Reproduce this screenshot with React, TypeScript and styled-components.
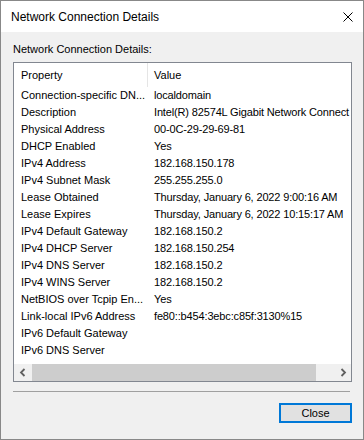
import React from 'react';
import styled, { createGlobalStyle } from 'styled-components';

const GlobalStyle = createGlobalStyle`
	html, body {
		margin: 0;
		padding: 0;
		background: #ffffff;
	}
	* {
		box-sizing: border-box;
	}
`;

const rows: [string, string][] = [
	['Connection-specific DN...', 'localdomain'],
	['Description', 'Intel(R) 82574L Gigabit Network Connect'],
	['Physical Address', '00-0C-29-29-69-81'],
	['DHCP Enabled', 'Yes'],
	['IPv4 Address', '182.168.150.178'],
	['IPv4 Subnet Mask', '255.255.255.0'],
	['Lease Obtained', 'Thursday, January 6, 2022 9:00:16 AM'],
	['Lease Expires', 'Thursday, January 6, 2022 10:15:17 AM'],
	['IPv4 Default Gateway', '182.168.150.2'],
	['IPv4 DHCP Server', '182.168.150.254'],
	['IPv4 DNS Server', '182.168.150.2'],
	['IPv4 WINS Server', '182.168.150.2'],
	['NetBIOS over Tcpip En...', 'Yes'],
	['Link-local IPv6 Address', 'fe80::b454:3ebc:c85f:3130%15'],
	['IPv6 Default Gateway', ''],
	['IPv6 DNS Server', ''],
];

const Window = styled.div`
	width: 364px;
	height: 440px;
	border: 1px solid #888888;
	background: #f0f0f0;
	display: flex;
	flex-direction: column;
	font-family: 'Liberation Sans', Arial, sans-serif;
	color: #000;
`;

const TitleBar = styled.div`
	height: 31px;
	background: #ffffff;
	display: flex;
	align-items: center;
	justify-content: space-between;
	padding: 0 10px 0 10px;
	font-size: 12px;
`;

const CloseGlyph = styled.svg`
	width: 10px;
	height: 10px;
	display: block;
`;

const Body = styled.div`
	flex: 1;
	display: flex;
	flex-direction: column;
	padding: 11px 11px 0 12px;
	font-size: 11px;
`;

const Caption = styled.div`
	height: 19px;
	line-height: 13px;
`;

const ListBox = styled.div`
	height: 320px;
	border: 1px solid #828790;
	background: #ffffff;
	display: flex;
	flex-direction: column;
	overflow: hidden;
`;

const HeaderRow = styled.div`
	height: 24px;
	display: grid;
	grid-template-columns: 134px 1fr;
	flex: none;
`;

const HeaderCell = styled.div<{ $divider?: boolean }>`
	padding-left: ${(p) => (p.$divider ? '7px' : '6px')};
	display: flex;
	align-items: center;
	padding-bottom: 1px;
	border-right: ${(p) => (p.$divider ? '1px solid #e5e5e5' : 'none')};
`;

const Rows = styled.div`
	flex: 1;
	overflow: hidden;
`;

const Row = styled.div`
	height: 17px;
	display: grid;
	grid-template-columns: 134px 1fr;
	white-space: nowrap;
`;

const Cell = styled.div<{ $value?: boolean }>`
	padding-left: ${(p) => (p.$value ? '6px' : '7px')};
	letter-spacing: ${(p) => (p.$value ? '-0.15px' : '0')};
	line-height: 16px;
	overflow: hidden;
`;

const ScrollBar = styled.div`
	height: 17px;
	flex: none;
	display: grid;
	grid-template-columns: 18px 284px 1fr 17px;
	background: #f0f0f0;
`;

const ArrowBox = styled.div`
	display: flex;
	align-items: center;
	justify-content: center;
`;

const Thumb = styled.div`
	background: #cdcdcd;
`;

const Separator = styled.div`
	height: 1px;
	background: #a0a0a0;
	margin: 9px 2px 0 0;
`;

const Footer = styled.div`
	display: flex;
	justify-content: flex-end;
	padding-top: 11px;
`;

const Button = styled.button`
	width: 73px;
	height: 20px;
	border: 2px solid #0078d7;
	background: #e1e1e1;
	font-family: 'Liberation Sans', Arial, sans-serif;
	font-size: 11px;
	color: #000;
	padding: 0;
	margin: 0;
`;

const Chevron = ({ dir }: { dir: 'left' | 'right' }) => (
	<svg width="8" height="9" viewBox="0 0 8 9">
		<path
			d={dir === 'left' ? 'M5.5 1 L2 4.5 L5.5 8' : 'M2.5 1 L6 4.5 L2.5 8'}
			fill="none"
			stroke="#606060"
			strokeWidth="1.8"
		/>
	</svg>
);

export default function App() {
	return (
		<>
			<GlobalStyle />
			<Window>
				<TitleBar>
					<span>Network Connection Details</span>
					<CloseGlyph viewBox="0 0 10 10">
						<path d="M0.5 0.5 L9.5 9.5 M9.5 0.5 L0.5 9.5" stroke="#000" strokeWidth="1" />
					</CloseGlyph>
				</TitleBar>
				<Body>
					<Caption>Network Connection Details:</Caption>
					<ListBox>
						<HeaderRow>
							<HeaderCell $divider>Property</HeaderCell>
							<HeaderCell>Value</HeaderCell>
						</HeaderRow>
						<Rows>
							{rows.map(([name, value]) => (
								<Row key={name}>
									<Cell>{name}</Cell>
									<Cell $value>{value}</Cell>
								</Row>
							))}
						</Rows>
						<ScrollBar>
							<ArrowBox>
								<Chevron dir="left" />
							</ArrowBox>
							<Thumb />
							<div />
							<ArrowBox>
								<Chevron dir="right" />
							</ArrowBox>
						</ScrollBar>
					</ListBox>
					<Separator />
					<Footer>
						<Button>Close</Button>
					</Footer>
				</Body>
			</Window>
		</>
	);
}
